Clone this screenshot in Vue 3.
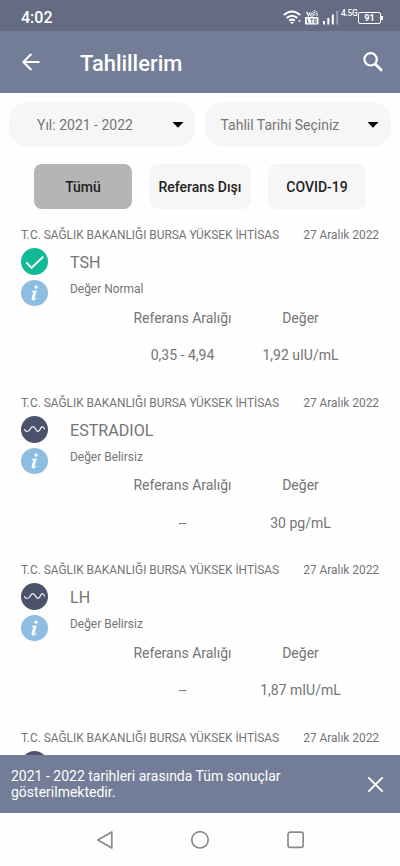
<script setup>
const hospital = 'T.C. SAĞLIK BAKANLIĞI BURSA YÜKSEK İHTİSAS'
const date = '27 Aralık 2022'
const results = [
  { name: 'TSH', normal: true, status: 'Değer Normal', range: '0,35 - 4,94', value: '1,92 uIU/mL' },
  { name: 'ESTRADIOL', normal: false, status: 'Değer Belirsiz', range: '--', value: '30 pg/mL' },
  { name: 'LH', normal: false, status: 'Değer Belirsiz', range: '--', value: '1,87 mIU/mL' },
  { normal: false }
]
</script>

<template>
  <div class="screen">
    <div class="status-bar">
      <span class="clock">4:02</span>
      <div class="signals">
        <svg class="wifi" width="19" height="15" viewBox="0 0 19 15" fill="none" stroke="#fff" stroke-width="2">
          <path d="M.8 5.1Q9 -2 17.200 5.100" />
          <path d="M3.600 8Q9 3.400 14.400 8" />
          <path d="M6.200 10.700Q9 8.500 11.800 10.700" />
          <path d="M7 12h4l-2 2.300z" fill="#fff" stroke="none" />
          <path d="M15 11.500l1.500-2 1.500 2z" fill="#fff" stroke="none" />
        </svg>
        <svg class="volte" width="14" height="15" viewBox="0 0 14 15">
          <path d="M1.500 1.800l2 4 1.500-3.600" fill="none" stroke="#fff" stroke-width="1.200" />
          <circle cx="7" cy="4.800" r="1.400" fill="none" stroke="#fff" />
          <path d="M7.500 1.400q3 .5 2.500 4M9 .4q4 1 3 5.600" fill="none" stroke="#fff" stroke-width=".9" />
          <rect y="7" width="13.500" height="7.600" rx=".8" fill="#fff" />
          <path d="M2.300 8.500v4.300h2M5 9h3.600M6.800 9v4.200M12 9H9.700v3.900H12M9.700 11H12" fill="none" stroke="#686e84" stroke-width="1" />
        </svg>
        <svg class="bars" width="16" height="15" viewBox="0 0 16 15" fill="#fff">
          <rect y="11" width="2" height="3.500" /><rect x="4.300" y="8" width="2" height="6.500" />
          <rect x="8.800" y="4.500" width="2" height="10" /><rect x="13.200" y="1" width="2" height="13.500" opacity=".35" />
        </svg>
        <span class="network">4.5G</span>
        <div class="battery"><span>91</span></div>
        <i class="battery-tip"></i>
      </div>
    </div>

    <header class="app-bar">
      <svg class="back" width="18" height="18" viewBox="0 0 18 18" fill="none" stroke="#fff" stroke-width="2.100">
        <path d="M17.500 9H1.500M9.300 1.100L1.400 9l7.900 7.900" />
      </svg>
      <h1>Tahlillerim</h1>
      <svg class="search" width="20" height="20" viewBox="0 0 20 20" fill="none" stroke="#fff">
        <circle cx="7.600" cy="7.300" r="6.200" stroke-width="2.200" />
        <path d="M11.900 11.700L19 18.800" stroke-width="2.700" />
      </svg>
    </header>

    <main>
      <div class="filters">
        <div class="select year"><span>Yıl: 2021 - 2022</span><svg width="12" height="6" viewBox="0 0 12 6"><path d="M.5 0h11L6 5.700z" /></svg></div>
        <div class="select day"><span>Tahlil Tarihi Seçiniz</span><svg width="12" height="6" viewBox="0 0 12 6"><path d="M.5 0h11L6 5.700z" /></svg></div>
      </div>
      <div class="tabs">
        <button class="active">Tümü</button>
        <button class="reference">Referans Dışı</button>
        <button>COVID-19</button>
      </div>

      <section v-for="(r, index) in results" :key="index" class="result">
        <div class="source"><span class="hospital">{{ hospital }}</span><span class="date">{{ date }}</span></div>
        <div class="summary">
          <div class="icons">
            <svg v-if="r.normal" width="27" height="27" viewBox="0 0 27 27">
              <circle cx="13.500" cy="13.500" r="13.500" fill="#12b996" />
              <path d="M5.300 14.400l5.300 5.400L22.300 8.600" fill="none" stroke="#fff" stroke-width="1.900" />
            </svg>
            <svg v-else width="27" height="27" viewBox="0 0 27 27">
              <circle cx="13.500" cy="13.500" r="13.500" fill="#4b526c" />
              <path d="M3.300 13.300C5 16.200 7.500 16.400 9.300 13S12.800 10 14.500 13 17.800 16.500 19.300 13 22.500 10.300 23.700 13.400" fill="none" stroke="#fff" stroke-width="1.200" />
            </svg>
            <svg width="27" height="26" viewBox="0 0 27 26">
              <ellipse cx="13.500" cy="13" rx="13.500" ry="13" fill="#8dbde0" />
              <circle cx="15.100" cy="7.100" r="1.700" fill="#fff" />
              <path d="M10.600 11.100q2.600-.3 5.200-.9l-2.300 7.800q-.3 1.300.4 1 .8-.4 1.500-1.500l.6.400q-1.500 2.500-3.800 2.500-2.100 0-1.500-2.300l1.400-5q.3-1.300-.7-1.300h-.9z" fill="#fff" />
            </svg>
          </div>
          <div v-if="r.name" class="description">
            <div class="name">{{ r.name }}</div>
            <div class="state">{{ r.status }}</div>
          </div>
        </div>
        <div v-if="r.name" class="values">
          <span>Referans Aralığı</span><span>Değer</span>
          <span>{{ r.range }}</span><span>{{ r.value }}</span>
        </div>
      </section>
    </main>

    <div class="notice">
      <p>2021 - 2022 tarihleri arasında Tüm sonuçlar<br>gösterilmektedir.</p>
      <svg width="17" height="17" viewBox="0 0 17 17" fill="none" stroke="#fff" stroke-width="1.900"><path d="M1.300 1.300l14.400 14.400M15.700 1.300L1.300 15.700" /></svg>
    </div>
    <nav>
      <svg width="18" height="20" viewBox="0 0 18 20"><path d="M15.800 2v16L1.800 10z" /></svg>
      <svg width="20" height="20" viewBox="0 0 20 20"><circle cx="9" cy="9.800" r="8.200" /></svg>
      <svg width="18" height="18" viewBox="0 0 18 18"><rect x="1" y="1.200" width="15.200" height="15.200" rx="2.200" /></svg>
    </nav>
  </div>
</template>

<style>
body { background: #fefefe; overflow: hidden; }
</style>

<style scoped>
* { box-sizing: border-box; }
.screen { width: 400px; height: 866px; display: flex; flex-direction: column; overflow: hidden; background: #fefefe; color: #757575; font-family: Roboto, sans-serif; }
svg { display: block; flex: none; }
span, .name, .state, h1, button { white-space: nowrap; }
.status-bar { flex: none; height: 31px; padding: 0 17px 0 21px; display: flex; justify-content: space-between; background: #646b82; color: #fff; }
.clock { padding-top: 8px; font-size: 16px; line-height: 20px; font-weight: 500; }
.signals { display: flex; align-items: flex-start; padding-top: 10px; }
.wifi { margin-right: -1px; }
.volte { margin-left: 4px; }
.bars { margin-left: 4px; }
.network { margin-left: 2px; width: 16px; font-size: 8.500px; font-weight: 500; line-height: 7px; letter-spacing: -.3px; }
.battery { margin: 1.500px 0 0 1px; width: 23px; height: 12px; border: 1px solid #fff; border-radius: 2px; font-size: 9px; font-weight: 700; line-height: 10.500px; text-align: center; }
.battery-tip { width: 2px; height: 4px; margin-top: 5.500px; background: #fff; }
.app-bar { flex: none; height: 62px; padding: 0 17px 0 22px; display: flex; align-items: center; background: #737d97; color: #fff; }
h1 { margin: 3px auto 0 40px; font-size: 21.900px; line-height: 28px; font-weight: 500; }
main { flex: 1; min-height: 0; overflow: hidden; padding-top: 9px; }
.filters { display: flex; gap: 10px; padding: 0 9px; }
.select { width: 186px; height: 45px; display: flex; align-items: center; justify-content: space-between; border-radius: 19px; background: #f6f6f6; font-size: 14px; padding-top: 1px; }
.year { padding-left: 28px; padding-right: 11px; }
.day { padding-left: 15.500px; padding-right: 12px; }
.select svg { fill: #000; }
.tabs { display: flex; justify-content: space-between; padding: 17px 34px 18px; }
button { width: 98px; height: 45px; padding: 0; border: 0; border-radius: 8px; background: #f6f6f6; color: #222; font: 500 14px Roboto, sans-serif; }
.reference { width: 101px; }
.active { background: #b5b5b5; }
.result { height: 167.700px; padding: 0 21px; }
.source { display: flex; justify-content: space-between; height: 16px; font-size: 11.880px; line-height: 16px; }
.summary { display: flex; height: 63.500px; padding-top: 5px; }
.icons { display: flex; flex-direction: column; gap: 5px; }
.description { margin-left: 22px; }
.name { height: 30px; font-size: 16.100px; line-height: 29.500px; }
.state { font-size: 11.950px; line-height: 22px; }
.values { display: grid; grid-template-columns: 118px 118px; justify-content: end; margin-right: 19.500px; grid-auto-rows: 37.500px; font-size: 14px; line-height: 22px; text-align: center; }
.notice { flex: none; height: 58px; padding: 0 16px 0 11px; display: flex; align-items: center; justify-content: space-between; background: #737d97; color: #fff; }
.notice p { margin: 0; font-size: 14px; line-height: 16.400px; }
nav { flex: none; height: 53px; padding: 0 95px 0 96px; display: flex; align-items: center; justify-content: space-between; }
nav svg { fill: none; stroke: #8b8b8b; stroke-width: 1.700; stroke-linejoin: round; }
</style>
